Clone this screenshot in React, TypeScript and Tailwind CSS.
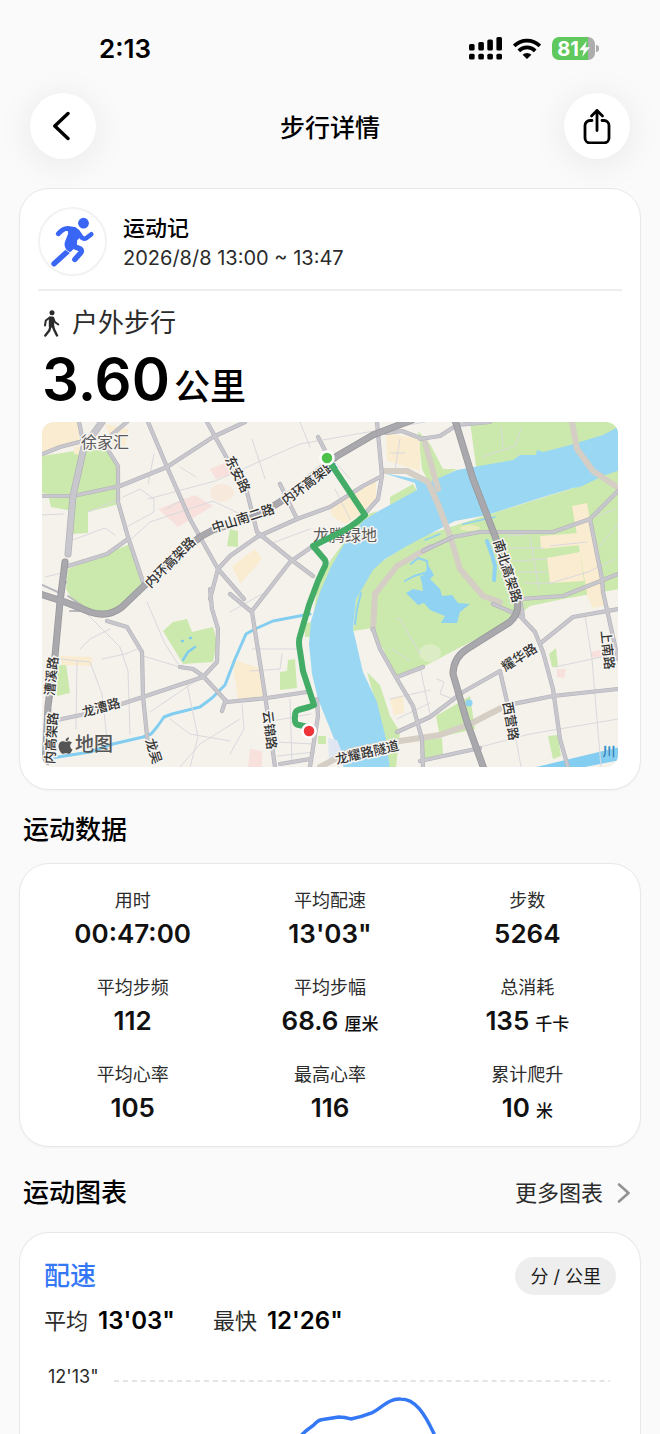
import type { ReactNode } from "react";
import { FaApple } from "react-icons/fa";

interface Stat {
  label: string;
  value: string;
  unit?: string;
}

const stats: Stat[] = [
  { label: "用时", value: "00:47:00" },
  { label: "平均配速", value: "13'03\"" },
  { label: "步数", value: "5264" },
  { label: "平均步频", value: "112" },
  { label: "平均步幅", value: "68.6", unit: "厘米" },
  { label: "总消耗", value: "135", unit: "千卡" },
  { label: "平均心率", value: "105" },
  { label: "最高心率", value: "116" },
  { label: "累计爬升", value: "10", unit: "米" },
];

const greens = [
  "42,457 75,452 105,450 118,466 119,505 88,513 88,534 72,535 73,512 51,508 48,495 42,494",
  "68,570 130,545 143,583 118,611 100,613 75,605 66,590",
  "163,632 173,623 187,620 192,633 213,628 217,643 213,663 183,665",
  "57,667 66,665 70,694 57,697",
  "178,518 181,516 182,521 178,522",
  "230,530 238,532 238,548 227,547",
  "470,423 620,423 620,440 477,474",
  "418,432 430,445 443,470 457,470 430,486 422,470",
  "390,498 413,485 417,492 390,506",
  "363,517 377,512 343,550 325,592 314,612 317,590 330,562 350,535",
  "620,470 580,487 487,516 420,538 373,568 356,598 353,632 373,629 397,680 423,668 457,650 510,623 530,607 563,600 620,590",
  "280,673 287,672 288,661 295,660 297,689 280,691",
  "304,625 311,623 312,638 305,638",
  "367,673 380,686 390,717 400,733 396,768 388,768 383,730",
  "318,737 326,737 326,745 318,745",
  "436,717 470,697 475,730 440,738",
  "549,655 556,649 558,668 552,668",
  "548,737 558,736 561,757 553,760",
  "420,741 442,739 443,755 421,760",
];

const creams = [
  "42,423 78,423 80,446 42,453",
  "74,448 82,448 82,456 74,455",
  "105,425 128,430 125,450 115,450",
  "330,507 376,480 376,500 360,516 345,525 332,517",
  "232,567 255,550 262,560 240,585",
  "386,434 420,440 420,472 387,462",
  "60,657 92,658 92,667 62,666",
  "232,660 262,670 265,697 238,700",
  "572,507 587,504 603,598 588,600",
  "540,537 579,534 581,546 541,550",
  "547,559 580,553 584,582 550,584",
  "587,593 603,593 604,607 592,609",
  "390,700 403,696 404,714 394,716",
];

const pinks = [
  "158,510 195,496 213,507 178,528",
  "210,470 225,464 232,475 216,480",
  "557,670 566,670 564,679 557,678",
  "590,653 605,650 604,657 592,659",
  "250,750 262,752 262,768 248,768",
];

const minorRoads = [
  "M148 500L215 482L300 445L425 423M123 498L140 490L154 500L154 513L123 530",
  "M128 543L150 523L213 502L240 515M70 542L105 529L115 536M88 513L120 500",
  "M42 516L64 515M45 578L66 573M154 455L148 485M184 500L166 510M180 468L196 478",
  "M75 603L120 648L128 672L130 735M77 662L76 730M60 660L90 663L102 695L107 740",
  "M147 603L165 645L180 668L143 657M102 660L125 655L137 650M80 650L90 640L110 630",
  "M203 677L150 713M187 685L198 738L190 768M180 768L200 745L240 720M170 720L190 735L230 742",
  "M252 650L298 650M250 672L280 670L282 655M242 705L244 730L230 755M230 613L262 595",
  "M272 722L311 715M275 743L313 745M277 757L315 753M290 700L292 765",
  "M252 440L265 480M300 423L310 448M328 455L350 480M270 545L310 530M335 490L350 520",
  "M482 458L515 447L521 430M501 428L503 448M508 537L545 533M509 549L543 549M513 562L547 560M518 573L547 573M524 584L550 584M530 538L539 590M548 585L588 573L615 560",
  "M397 620L400 620L420 655M420 668L430 715M437 680L444 683L440 695L453 700",
  "M585 617L592 660L601 768M555 668L615 655M480 748L530 735L618 720M515 735L521 768",
  "M390 700L430 691M397 720L430 704M392 650L410 662",
  "M550 547L587 543M597 517L615 510M599 548L618 525M400 440L395 470M391 454L405 454",
];

const roads = [
  "M40 497L73 497L120 487L167 468L213 438L245 423",
  "M40 456L60 448L83 442M79 423L83 442M127 423L103 443",
  "M103 443L118 467L118 503L128 538L143 583",
  "M148 423L167 468L190 520L218 570L244 600",
  "M207 423L234 472L247 493L257 533L293 562L313 577",
  "M68 567L107 555L128 540",
  "M210 600L218 570L230 557L257 538L297 520L330 508L363 487L382 477",
  "M377 423L382 477L378 500L363 517M318 438L328 457M280 485L297 520",
  "M210 590L212 610L218 630L217 663L203 678L143 698L100 712L57 721",
  "M107 622L127 628L142 653L143 697L148 747",
  "M180 668L193 670L203 677L227 703L267 699L307 693",
  "M230 595L252 613L263 683L267 710L275 768M252 612L290 563L313 547",
  "M317 700L318 717L310 768M280 765L310 760M225 703L222 712",
  "M373 630L380 650L397 680L413 707L422 740L423 768M397 678L423 668",
  "M397 733L430 718L463 693L500 672L508 707",
  "M423 552L453 538L480 533L553 533L590 520L618 492",
  "M590 520L602 580L603 593L618 660M520 600L563 597L618 575",
  "M520 600L523 617M493 605L520 617L535 633L543 653L553 690L560 740L568 768",
  "M542 643L573 618L618 610M503 707L553 697L618 690M420 762L480 749",
  "M420 440L440 437L457 426L490 423M386 434L402 432L420 439",
];

const bridges = [
  "M383 472L407 472L428 483L438 505L450 537L460 570L483 597L500 603M424 440L438 490",
  "M572 423L577 450L593 472L617 488",
  "M430 548L397 567L375 595L373 630",
  "M320 768L350 752L400 742L440 736L470 725L505 707",
];

const elevatedRoads = [
  "M40 595L65 603L90 613Q108 619 122 608L145 586L200 538L213 531L257 517L280 503L337 457L373 436L412 421",
  "M65 563L60 603L55 657L48 707L45 768",
  "M455 421L473 480L495 537L517 600Q520 614 510 623L467 650Q453 659 453 675L467 723L484 770",
];

interface RoadLabel {
  text: string;
  x: number;
  y: number;
  angle: number;
}

// x and y are the middle of each label
const roadLabels: RoadLabel[] = [
  { text: "东安路", x: 238, y: 475, angle: 63 },
  { text: "中山南二路", x: 243, y: 519, angle: -18 },
  { text: "内环高架路", x: 170, y: 563, angle: -45 },
  { text: "内环高架路", x: 309, y: 483, angle: -37 },
  { text: "南北高架路", x: 508, y: 572, angle: 72 },
  { text: "漕溪路", x: 51, y: 677, angle: -84 },
  { text: "内高架路", x: 51, y: 739, angle: -86 },
  { text: "龙漕路", x: 101, y: 708, angle: -15 },
  { text: "龙吴", x: 154, y: 752, angle: 72 },
  { text: "云锦路", x: 270, y: 731, angle: 83 },
  { text: "龙耀路隧道", x: 367, y: 753, angle: -13 },
  { text: "耀华路", x: 519, y: 658, angle: -33 },
  { text: "西营路", x: 511, y: 722, angle: 80 },
  { text: "上南路", x: 608, y: 651, angle: 84 },
];

const RouteMap = () => (
  <div className="relative overflow-hidden rounded-xl">
    <svg
      viewBox="42 423 576 345"
      className="block w-full"
      fill="none"
      strokeLinejoin="round"
      strokeLinecap="round"
      fontFamily='Inter, "Noto Sans CJK SC", sans-serif'
    >
      <rect x="42" y="423" width="576" height="345" fill="#f5f2ec" />
      <g fill="#cbe9ac">
        {greens.map((points) => (
          <polygon key={points} points={points} />
        ))}
      </g>
      <g fill="#faecd0">
        {creams.map((points) => (
          <polygon key={points} points={points} />
        ))}
      </g>
      <g fill="#f8e0dd">
        {pinks.map((points) => (
          <polygon key={points} points={points} />
        ))}
      </g>
      <ellipse cx="222" cy="494" rx="12" ry="9" fill="#f7eadc" />

      {/* river, creek and lakes */}
      <path
        d="M383 474L405 478L430 483L457 471L513 461L520 456L536 456L537 451L543 453L570 446L603 436L620 427V471L603 477L580 488L573 489L540 499L487 516L455 522L420 540L407 547L385 560L373 571L362 590L356 600L353 630L363 673L377 703L386 740L390 770H344L337 747L318 700L312 675L309 645L311 622L320 593L331 568L343 547L363 522L377 513L417 491L415 484Z"
        fill="#9ad7f3"
      />
      <path
        d="M45 760L90 753L113 745L143 738L151 735L157 728L164 718L172 715L200 708L212 699L225 686L235 660L246 635L255 630L273 622L310 615"
        stroke="#83cef0"
        strokeWidth="3"
      />
      <path d="M528 770L603 752L620 748V761L575 770Z" fill="#83cef0" />
      <path
        d="M428 566L434 576L430 580L440 590L442 597L452 596L458 604L470 605L460 613L457 624H441L445 617L430 611L424 604L418 606L406 594L413 590L423 592L422 584L420 578L425 575Z"
        fill="#8fd2f2"
      />
      <path
        d="M411 565L418 559L427 562L428 573L414 577L405 582M361 594L357 610L355 625"
        stroke="#8fd2f2"
        strokeWidth="2"
      />
      <path d="M487 542L492 556L495 567L494 581" stroke="#8fd2f2" strokeWidth="4" />
      <path d="M463 525L495 518M425 541L440 535" stroke="#8fd2f2" strokeWidth="1.5" />
      <path d="M183 661L188 653L195 648M182 642h1M190 639h1" stroke="#7fccf0" strokeWidth="2.5" />
      <ellipse cx="430" cy="654" rx="11" ry="9" fill="#dcecc4" />
      <ellipse cx="470" cy="529" rx="10" ry="3" fill="#e8ebbd" />
      <path d="M328 739L337 741L343 756L329 760Z" fill="#e0e6f2" />
      <circle cx="469" cy="704" r="3.5" fill="#8fd2f2" />

      <g stroke="#d9d8dd" strokeWidth="1">
        {minorRoads.map((d) => (
          <path key={d} d={d} />
        ))}
      </g>
      <g stroke="#d4cec4" strokeWidth="6">
        {bridges.map((d) => (
          <path key={d} d={d} />
        ))}
      </g>
      <g stroke="#b3b2b8" strokeWidth="4.2">
        {roads.map((d) => (
          <path key={d} d={d} />
        ))}
      </g>
      <g stroke="#c8c7cd" strokeWidth="3">
        {roads.map((d) => (
          <path key={d} d={d} />
        ))}
      </g>
      <path d="M102 423L84 448L73 497L68 555" stroke="#b3b2b8" strokeWidth="7" />
      <path d="M102 423L84 448L73 497L68 555" stroke="#c8c7cd" strokeWidth="5.6" />
      <path d="M42 586L60 594L66 583M68 597L90 612L70 612" stroke="#b9b8be" strokeWidth="2" />

      <g stroke="#98979c" strokeWidth="7">
        {elevatedRoads.map((d) => (
          <path key={d} d={d} />
        ))}
      </g>
      <g stroke="#a9a8ac" strokeWidth="5.4">
        {elevatedRoads.map((d) => (
          <path key={d} d={d} />
        ))}
      </g>

      <g textAnchor="middle" paintOrder="stroke" stroke="#f7f5f1" strokeWidth="3">
        <g fill="#333333" fontSize="13" fontWeight="500">
          {roadLabels.map(({ text, x, y, angle }) => (
            <text
              key={`${text}-${x}`}
              x={x}
              y={y}
              dy="5"
              transform={`rotate(${angle} ${x} ${y})`}
            >
              {text}
            </text>
          ))}
        </g>
        <g fill="#5a5a5a" fontSize="16">
          <text x="105" y="449">徐家汇</text>
          <text x="345" y="542">龙腾绿地</text>
        </g>
        <text x="609" y="757" fill="#2b7cb3" stroke="#9ad7f3" strokeWidth="1" fontSize="13" fontWeight="500">
          川
        </text>
      </g>

      {/* walked route */}
      <path
        d="M327 459L365 516Q351 529 335 536L313 547L325 561Q327 565 323 571L318 582L309 606L300 637Q298 642 300 652L303 672L314 706L309 708L298 711Q295 712 295 717Q294 726 299 726L308 728"
        stroke="#43ad67"
        strokeWidth="6"
      />
      <circle cx="327" cy="459" r="6.5" fill="#4cc24a" stroke="#ffffff" strokeWidth="2.5" />
      <circle cx="309" cy="732" r="6.5" fill="#ed3338" stroke="#ffffff" strokeWidth="2.5" />
    </svg>
    <div className="absolute bottom-2 left-[14px] flex items-center text-[#555555]">
      <FaApple className="size-[19px]" />
      <span className="text-[19px] leading-7 font-medium">地图</span>
    </div>
  </div>
);

const StatusBar = () => (
  <div className="flex h-[93px] items-center justify-between pt-1 pr-[61px] pl-[99px]">
    <span className="text-[26px] leading-8 font-semibold">2:13</span>
    <div className="flex items-center gap-[11px]">
      <svg viewBox="0 0 33 23" className="h-[23px] w-[33px]">
        <rect x="0" y="7" width="5.6" height="6.5" rx="1.5" />
        <rect x="9.3" y="5" width="5.6" height="8.5" rx="1.5" />
        <rect x="18.3" y="2.5" width="5.6" height="11" rx="1.5" />
        <rect x="27.4" y="0" width="5.6" height="13.5" rx="1.5" />
        <rect x="0" y="16.8" width="5.6" height="5.6" rx="1.5" />
        <rect x="9.3" y="16.8" width="5.6" height="5.6" rx="1.5" />
        <rect x="18.3" y="16.8" width="5.6" height="5.6" rx="1.5" />
        <rect x="27.4" y="16.8" width="5.6" height="5.6" rx="1.5" />
      </svg>
      <svg viewBox="0 0 28 21" className="h-[21px] w-7" fill="none" stroke="#000000" strokeWidth="3.8">
        <path d="M1.2 7.9A18.3 18.3 0 0 1 26.8 7.9" />
        <path d="M5.8 12.8A11.7 11.7 0 0 1 22.2 12.8" />
        <path d="M14 21L9.6 16.7A6.3 6.3 0 0 1 18.4 16.7Z" fill="#000000" stroke="none" />
      </svg>
      <div className="flex items-center gap-px">
        <div className="flex h-[23px] w-[43px] items-center justify-center rounded-[7px] bg-[linear-gradient(90deg,#5fc95d_83%,#adadad_83%)] text-white">
          <span className="text-[20px] leading-6 font-bold">81</span>
          <svg viewBox="0 0 11 16" className="h-4 w-[11px]" fill="currentColor">
            <path d="M7.8 0L0.300 9.200H4.800L3 16L10.800 6.300H6.200Z" />
          </svg>
        </div>
        <span className="h-[7px] w-[3px] rounded-r-full bg-[#adadad]" />
      </div>
    </div>
  </div>
);

const RoundButton = ({ label, children }: { label: string; children: ReactNode }) => (
  <button
    type="button"
    aria-label={label}
    className="flex size-[66px] items-center justify-center rounded-full bg-white shadow-[0_4px_36px_rgba(0,0,0,0.08)]"
  >
    {children}
  </button>
);

const TopBar = () => (
  <header className="flex items-center justify-between px-[30px] pb-[29px]">
    <RoundButton label="返回">
      <svg viewBox="0 0 20 30" className="h-[30px] w-5" fill="none" stroke="#000000" strokeWidth="3.4" strokeLinecap="round" strokeLinejoin="round">
        <path d="M15 2.500L1.800 15L15 27.500" />
      </svg>
    </RoundButton>
    <h1 className="pt-[3px] text-[25px] leading-9 font-medium">步行详情</h1>
    <RoundButton label="分享">
      <svg viewBox="0 0 30 36" className="h-9 w-[30px]" fill="none" stroke="#000000" strokeWidth="2.8" strokeLinecap="round" strokeLinejoin="round">
        <path d="M10 12.500H8a5 5 0 0 0-5 5V30a5 5 0 0 0 5 5h14a5 5 0 0 0 5-5V17.500a5 5 0 0 0-5-5H20" />
        <path d="M15 22.500V2.500M9.500 8L15 2.500L20.500 8" />
      </svg>
    </RoundButton>
  </header>
);

const RunnerIcon = () => (
  <svg viewBox="1.500 1.500 65 65" className="size-full" fill="none" stroke="#3a66f6" strokeLinecap="round" strokeLinejoin="round">
    <circle cx="45" cy="15.700" r="5.400" fill="#3a66f6" stroke="none" />
    <path d="M19.700 26.300Q24.500 20.800 29 20.800L36 21.800" strokeWidth="4.800" />
    <path d="M29.500 20.500Q37 19.300 40.500 23.500L43 27.500L38 32.500L37.500 38L32 43.500Q25.500 41 27 35L30.500 26Z" fill="#3a66f6" strokeWidth="1.500" />
    <path d="M39 25L43.500 30.300Q45.500 32 48 30.500L52.800 26.800" strokeWidth="4.600" />
    <path d="M33 38L41.500 41.300Q44 43 42 45.500L36.300 52" strokeWidth="5.400" />
    <path d="M29 44L15.500 56.300" strokeWidth="5.400" />
    <path d="M26 41.500L32 45.500" stroke="#ffffff" strokeWidth="0.800" />
  </svg>
);

const WalkerIcon = () => (
  <svg viewBox="0 0 20 28" className="h-7 w-5" fill="none" stroke="#2b2b2b" strokeWidth="2" strokeLinecap="round" strokeLinejoin="round">
    <circle cx="10" cy="3.700" r="2.500" fill="#2b2b2b" stroke="none" />
    <path d="M7.800 8.500H10.800L11.300 17.500H7.800Z" fill="#2b2b2b" />
    <path d="M7.800 8.500L3.800 11.500L3 16.500M11.300 9L12.800 13L16.300 15.500" />
    <path d="M8.300 18L7.300 21.500L3.300 26.500M10.800 17L12.300 21L15 26.500" strokeWidth="2.400" />
  </svg>
);

const StatItem = ({ label, value, unit }: Stat) => (
  <div className="text-center">
    <dt className="text-[18px] leading-6 text-[#2b2b2b]">{label}</dt>
    <dd className="mt-[3px] text-[26px] leading-9 font-semibold text-[#111111]">
      {value}
      {unit && <span className="ml-[6px] text-[17px] leading-none font-medium">{unit}</span>}
    </dd>
  </div>
);

const cardClass = "rounded-[30px] border border-[#e8e8e8] bg-white shadow-[0_1px_2px_rgba(0,0,0,0.04)]";

export default function App() {
  return (
    <div className='min-h-screen overflow-hidden bg-[#fafafa] font-[Inter,"Noto_Sans_CJK_SC",sans-serif] text-black'>
      <StatusBar />
      <TopBar />

      <main className="px-[19px]">
        <section className={`${cardClass} px-[18px] pt-[18px] pb-[22px]`}>
          <div className="flex items-center gap-4 border-b-2 border-[#eeeeee] pb-[13px]">
            <div className="size-[69px] rounded-full border-2 border-[#f2f2f2]">
              <RunnerIcon />
            </div>
            <div className="pt-[2px]">
              <p className="text-[22px] leading-[30px] font-medium">运动记</p>
              <p className="text-[20px] leading-[30px] text-[#2b2b2b]">2026/8/8 13:00 ~ 13:47</p>
            </div>
          </div>
          <div className="px-1 pt-[14px]">
            <div className="flex items-center gap-[10px] text-[#2b2b2b]">
              <WalkerIcon />
              <h2 className="text-[26px] leading-9">户外步行</h2>
            </div>
            <p className="mt-2 mb-[13px] flex h-[60px] items-baseline gap-1">
              <span className="text-[58px] leading-[60px] font-semibold">3.60</span>
              <span className="text-[36px] leading-none font-medium">公里</span>
            </p>
            <RouteMap />
          </div>
        </section>

        <h2 className="px-1 pt-[22px] pb-[15px] text-[26px] leading-9 font-medium">运动数据</h2>
        <dl className={`${cardClass} grid grid-cols-3 gap-y-6 px-[14px] pt-[25px] pb-5`}>
          {stats.map((stat) => (
            <StatItem key={stat.label} {...stat} />
          ))}
        </dl>

        <div className="flex items-center justify-between px-1 pt-7 pb-[21px]">
          <h2 className="text-[26px] leading-9 font-medium">运动图表</h2>
          <a href="#charts" className="flex items-center gap-3 pr-[6px] text-[22px] leading-9 text-[#2b2b2b]">
            更多图表
            <svg viewBox="0 0 16 20" className="h-5 w-4" fill="none" stroke="#929292" strokeWidth="2.600" strokeLinecap="round" strokeLinejoin="round">
              <path d="M4 1.500L13.500 10L4 18.500" />
            </svg>
          </a>
        </div>

        <section id="charts" className="rounded-t-[30px] border border-b-0 border-[#e8e8e8] bg-white px-6 pt-6">
          <div className="flex items-center justify-between">
            <h3 className="text-[26px] leading-8 font-medium text-[#3478f6]">配速</h3>
            <button type="button" className="h-[38px] rounded-full bg-[#eeeeee] px-[15px] text-[18px] text-[#1c1c1c]">
              分 / 公里
            </button>
          </div>
          <div className="mt-2 flex gap-[38px] text-[22px] leading-9 text-[#2b2b2b]">
            <p className="flex items-baseline gap-[10px]">
              平均
              <span className="text-[24px] font-semibold text-black">13'03"</span>
            </p>
            <p className="flex items-baseline gap-[10px]">
              最快
              <span className="text-[24px] font-semibold text-black">12'26"</span>
            </p>
          </div>
          <div className="mt-[26px] flex items-start gap-[15px] pr-[6px] pl-1">
            <span className="text-[18px] leading-6 text-[#2b2b2b]">12'13"</span>
            <svg viewBox="0 0 497 70" className="min-w-0 flex-1" fill="none">
              <path d="M0 16H497" stroke="#dcdcdc" strokeWidth="1.500" strokeDasharray="5 4" />
              <path
                d="M178 81Q188 68 200 60Q204 55 209 54.500L225 52Q231 52 237 54Q248 52 258 48C267 44 275 33 287 34C302 34 311 49 320 68L324 81"
                stroke="#3478f6"
                strokeWidth="3.500"
                strokeLinejoin="round"
              />
            </svg>
          </div>
        </section>
      </main>
    </div>
  );
}
